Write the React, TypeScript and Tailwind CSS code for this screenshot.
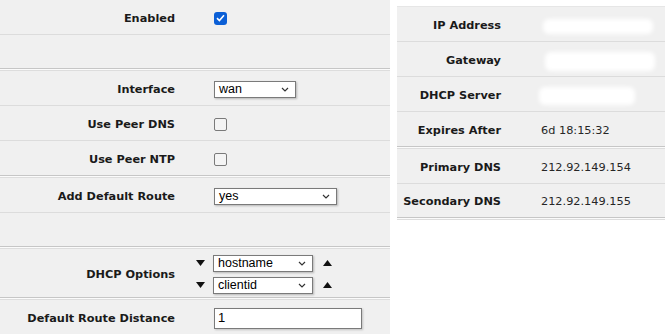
import React from 'react';

const labelFont = { fontFamily: '"DejaVu Sans", Verdana, sans-serif' };
const ctrlFont = { fontFamily: '"Liberation Sans", Arial, sans-serif' };

function Sep() {
  return <div className="h-px bg-[#dcdcdc]" />;
}

function SectionSep() {
  return (
    <div>
      <div className="h-px bg-[#c6c6c6]" />
      <div className="h-px bg-[#fbfbfb]" />
      <div className="h-px bg-[#dddddd]" />
    </div>
  );
}

function Chevron() {
  return (
    <svg width="8" height="5" viewBox="0 0 8 5" className="shrink-0">
      <path d="M1 1 L4 4 L7 1" fill="none" stroke="#333" strokeWidth="1.2" />
    </svg>
  );
}

function Select({ value, width }: { value: string; width: string }) {
  return (
    <div
      className={`${width} h-[17px] bg-white border border-[#7a7a7a] shadow-[1px_1px_2px_rgba(0,0,0,0.25)] flex items-center justify-between pl-[4px] pr-[6px] text-[12.5px] text-black leading-none`}
      style={ctrlFont}
    >
      <span>{value}</span>
      <Chevron />
    </div>
  );
}

function Checkbox({ checked }: { checked?: boolean }) {
  if (checked) {
    return (
      <div className="w-[13px] h-[13px] rounded-[3px] bg-[#0b5fd6] flex items-center justify-center">
        <svg width="9" height="8" viewBox="0 0 9 8">
          <path d="M1 4.2 L3.4 6.5 L8 1.3" fill="none" stroke="white" strokeWidth="1.6" />
        </svg>
      </div>
    );
  }
  return <div className="w-[13px] h-[13px] rounded-[2px] border border-[#7a7a7a] bg-[#f4f4f4]" />;
}

function Label({ w, children }: { w: string; children?: React.ReactNode }) {
  return (
    <div className={`${w} mt-[4px] text-right text-[11.3px] font-bold text-[#1a1a1a]`} style={labelFont}>
      {children}
    </div>
  );
}

function Row({ label, h = 'h-[34px]', children }: { label?: string; h?: string; children?: React.ReactNode }) {
  return (
    <div className={`${h} flex items-center`}>
      <Label w="w-[175px]">{label}</Label>
      <div className="ml-[39px] mt-[2px] flex items-center">{children}</div>
    </div>
  );
}

function TriDown() {
  return (
    <svg width="9" height="6" viewBox="0 0 9 6">
      <path d="M0 0 H9 L4.5 6 Z" fill="#111" />
    </svg>
  );
}

function TriUp() {
  return (
    <svg width="9" height="6" viewBox="0 0 9 6">
      <path d="M0 6 H9 L4.5 0 Z" fill="#111" />
    </svg>
  );
}

function InfoRow({ label, value, blur, h = 'h-[34px]' }: { label: string; value?: string; blur?: string; h?: string }) {
  return (
    <div className={`${h} flex items-center`}>
      <Label w="w-[104px]">{label}</Label>
      <div className="ml-[40px] mt-[4px] text-[11.3px] text-[#262626] relative" style={labelFont}>
        {value}
        {blur && <div className={`${blur} bg-white rounded-[6px] blur-[2px]`} />}
      </div>
    </div>
  );
}

export default function App() {
  return (
    <div className="w-[665px] h-[334px] bg-white flex overflow-hidden">
      {/* left: settings form */}
      <div className="w-[390px] bg-[#f0f0f0] shrink-0">
        <Row label="Enabled">
          <Checkbox checked />
        </Row>
        <Sep />
        <Row h="h-[33px]" />
        <SectionSep />
        <Row label="Interface">
          <Select value="wan" width="w-[82px]" />
        </Row>
        <Sep />
        <Row label="Use Peer DNS">
          <Checkbox />
        </Row>
        <Sep />
        <Row label="Use Peer NTP">
          <Checkbox />
        </Row>
        <SectionSep />
        <Row label="Add Default Route">
          <Select value="yes" width="w-[123px]" />
        </Row>
        <Sep />
        <Row h="h-[33px]" />
        <SectionSep />
        <div className="h-[48px] flex items-center">
          <Label w="w-[175px]">DHCP Options</Label>
          <div className="ml-[21px] mt-[2px] flex flex-col gap-[5px]">
            <div className="flex items-center">
              <TriDown />
              <div className="ml-[8px]">
                <Select value="hostname" width="w-[100px]" />
              </div>
              <div className="ml-[10px]">
                <TriUp />
              </div>
            </div>
            <div className="flex items-center">
              <TriDown />
              <div className="ml-[8px]">
                <Select value="clientid" width="w-[100px]" />
              </div>
              <div className="ml-[10px]">
                <TriUp />
              </div>
            </div>
          </div>
        </div>
        <SectionSep />
        <Row label="Default Route Distance">
          <div
            className="w-[148px] h-[21px] bg-white border border-[#7a7a7a] shadow-[1px_1px_2px_rgba(0,0,0,0.2)] flex items-center pl-[3px] text-[13px] text-black"
            style={ctrlFont}
          >
            1
          </div>
        </Row>
      </div>

      {/* right: lease status */}
      <div className="ml-[7px] flex-1 mt-[6px] self-start">
        <div className="h-px bg-[#e6e6e6]" />
        <div className="bg-[#f0f0f0]">
          <InfoRow label="IP Address" blur="absolute left-[2px] -top-[7px] w-[110px] h-[15px]" />
          <Sep />
          <InfoRow label="Gateway" blur="absolute left-[4px] -top-[9px] w-[110px] h-[19px]" />
          <Sep />
          <InfoRow label="DHCP Server" blur="absolute -left-[2px] -top-[9px] w-[96px] h-[18px]" />
          <Sep />
          <InfoRow label="Expires After" value="6d 18:15:32" />
          <SectionSep />
          <InfoRow label="Primary DNS" value="212.92.149.154" />
          <Sep />
          <InfoRow label="Secondary DNS" value="212.92.149.155" h="h-[33px]" />
          <SectionSep />
        </div>
      </div>
    </div>
  );
}
